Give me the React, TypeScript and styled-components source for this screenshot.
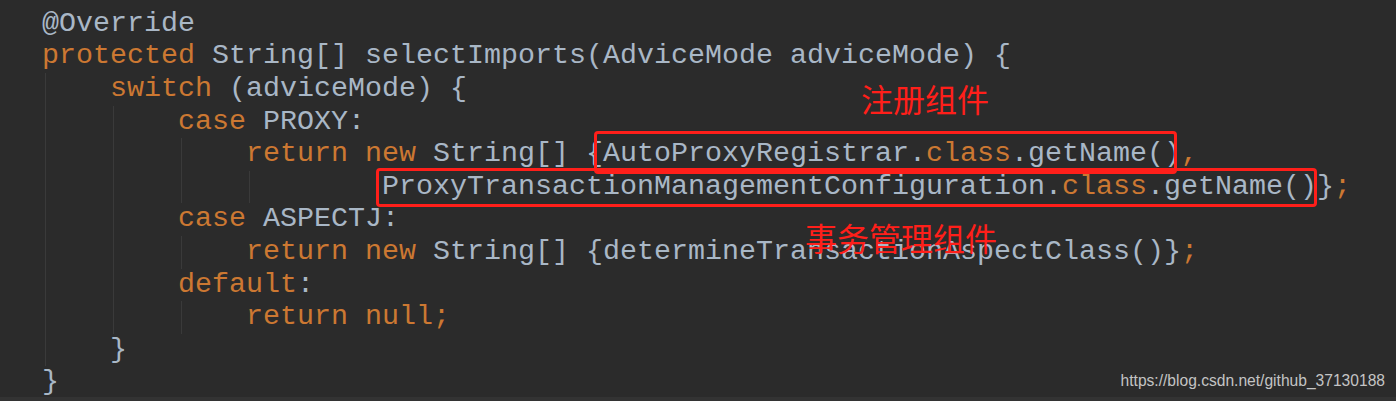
import React from "react";
import styled, { createGlobalStyle } from "styled-components";

const colors = {
  bg: "#2b2b2b",
  band: "#333333",
  text: "#a9b7c6",
  keyword: "#cc7832",
  guide: "#3a3a3a",
  red: "#ff1f1a",
  mark: "#c4c4c4",
};

const GlobalStyle = createGlobalStyle`
  html, body {
    margin: 0;
    padding: 0;
    background: ${colors.bg};
  }
`;

type LineProps = { $guides?: number };
type MarkProps = { $top: number; $right: number; $bottom: number; $left: number };
type NoteProps = { $x: number; $y: number };

export default function App() {
  return (
    <>
      <GlobalStyle />
      <Editor>
        <Code>
          <Line>@Override</Line>
          <Line>
            <K>protected</K> String[] selectImports(AdviceMode adviceMode) {"{"}
          </Line>
          <Line $guides={1}>
            {"    "}
            <K>switch</K> (adviceMode) {"{"}
          </Line>
          <Line $guides={2}>
            {"        "}
            <K>case</K> PROXY:
          </Line>
          <Line $guides={3}>
            {"            "}
            <K>return new</K> String[] {"{"}
            <Mark $top={6} $right={-4} $bottom={4} $left={9}>
              AutoProxyRegistrar.<K>class</K>.getName()
            </Mark>
            <K>,</K>
          </Line>
          <Line $guides={4}>
            {"                    "}
            <Mark $top={2} $right={0} $bottom={4} $left={6}>
              ProxyTransactionManagementConfiguration.<K>class</K>.getName()
            </Mark>
            {"}"}
            <K>;</K>
          </Line>
          <Line $guides={2}>
            {"        "}
            <K>case</K> ASPECTJ:
          </Line>
          <Line $guides={3}>
            {"            "}
            <K>return new</K> String[] {"{determineTransactionAspectClass()}"}
            <K>;</K>
          </Line>
          <Line $guides={2}>
            {"        "}
            <K>default</K>:
          </Line>
          <Line $guides={3}>
            {"            "}
            <K>return null;</K>
          </Line>
          <Line $guides={1}>{"    }"}</Line>
          <Line>{"}"}</Line>
        </Code>

        <Note $x={861} $y={78}>注册组件</Note>
        <Note $x={805} $y={217}>事务管理组件</Note>
        <Watermark>https://blog.csdn.net/github_37130188</Watermark>
      </Editor>
      <Band />
    </>
  );
}

const Editor = styled.div`
  position: relative;
  height: 397px;
  overflow: hidden;
  background: ${colors.bg};
`;

const Code = styled.div`
  padding: 7.8px 0 0 42px;
  font-family: "Liberation Mono", "Courier New", monospace;
  font-size: 28.33px;
  color: ${colors.text};
`;

const guideLayers = (n: number) =>
  Array.from({ length: n }, () => `linear-gradient(${colors.guide}, ${colors.guide})`).join(", ");

const guidePositions = (n: number) =>
  Array.from({ length: n }, (_, i) => `${3 + i * 68}px 0`).join(", ");

const Line = styled.div<LineProps>`
  height: 32.6px;
  line-height: 32.6px;
  white-space: pre;
  background-image: ${(p) => (p.$guides ? guideLayers(p.$guides) : "none")};
  background-position: ${(p) => (p.$guides ? guidePositions(p.$guides) : "0 0")};
  background-size: 1px 100%;
  background-repeat: no-repeat;
`;

const K = styled.span`
  color: ${colors.keyword};
`;

const Mark = styled.span<MarkProps>`
  position: relative;

  &::after {
    content: "";
    position: absolute;
    top: ${(p) => -p.$top}px;
    right: ${(p) => -p.$right}px;
    bottom: ${(p) => -p.$bottom}px;
    left: ${(p) => -p.$left}px;
    border: 3px solid ${colors.red};
    border-radius: 4px;
    pointer-events: none;
  }
`;

const Note = styled.div<NoteProps>`
  position: absolute;
  left: ${(p) => p.$x}px;
  top: ${(p) => p.$y}px;
  font-family: "Noto Sans CJK SC", sans-serif;
  font-size: 32px;
  line-height: 40px;
  color: ${colors.red};
  white-space: nowrap;
`;

const Watermark = styled.div`
  position: absolute;
  right: 11px;
  bottom: 8px;
  font-family: "Liberation Sans", Arial, sans-serif;
  font-size: 15.6px;
  line-height: 16px;
  color: ${colors.mark};
`;

const Band = styled.div`
  height: 4px;
  background: ${colors.band};
`;
